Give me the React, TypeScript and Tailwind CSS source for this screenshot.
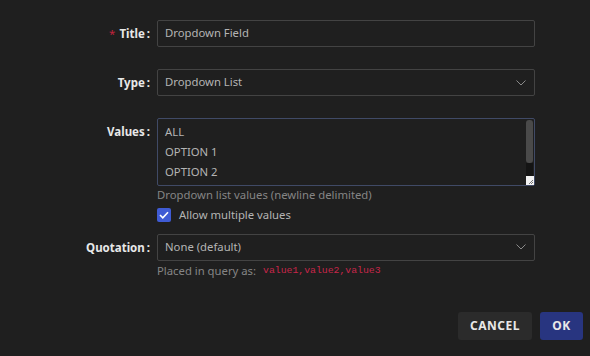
function Chevron() {
  return (
    <svg width="10" height="6" viewBox="0 0 10 6" className="text-[#8a8a8a]">
      <path d="M0.5 0.5 L5 5 L9.5 0.5" fill="none" stroke="currentColor" strokeWidth="1" />
    </svg>
  );
}

function Label({ text, required }: { text: string; required?: boolean }) {
  return (
    <div className="flex items-center justify-end text-[11.5px] font-bold text-[#e8e8e8] pr-[7px]">
      {required && <span className="text-[#c0233d] mr-[4px] font-normal">*</span>}
      <span>{text}</span>
      <span className="ml-[2px]">:</span>
    </div>
  );
}

function Select({ value }: { value: string }) {
  return (
    <div className="h-[27px] w-[378px] border border-[#434343] rounded-[2px] flex items-center justify-between pl-[7px] pr-[8px] text-[11.3px] text-[#b4b4b4]">
      <span>{value}</span>
      <Chevron />
    </div>
  );
}

export default function App() {
  return (
    <div
      className="w-[590px] h-[356px] bg-[#1f1f1f] flex flex-col"
      style={{ fontFamily: '"Noto Sans", "Open Sans", sans-serif' }}
    >
      <div className="pt-[20px] flex flex-col">
        {/* title */}
        <div className="grid grid-cols-[157px_378px] items-center">
          <Label text="Title" required />
          <div className="h-[27px] border border-[#434343] rounded-[2px] flex items-center pl-[7px] text-[11.3px] text-[#b4b4b4]">
            Dropdown Field
          </div>
        </div>

        {/* type */}
        <div className="grid grid-cols-[157px_378px] items-center mt-[22px]">
          <Label text="Type" />
          <Select value="Dropdown List" />
        </div>

        {/* values */}
        <div className="grid grid-cols-[157px_378px] mt-[22px]">
          <div className="pt-[5px]">
            <Label text="Values" />
          </div>
          <div className="flex flex-col">
            <div className="h-[68px] border border-[#404a66] rounded-[2px] flex">
              <div className="flex-1 pl-[7px] pt-[3px] text-[11.3px] leading-[20px] text-[#b4b4b4]">
                <div>ALL</div>
                <div>OPTION 1</div>
                <div>OPTION 2</div>
              </div>
              <div className="w-[7px] mr-[1px] flex flex-col">
                <div className="mt-[1px] h-[43px] bg-[#4a4a4a] rounded-[3px]" />
                <div className="flex-1 bg-[#141414]" />
                <div className="h-[9px] w-[8px] bg-[#f2f2f2] flex items-end justify-end">
                  <svg width="6" height="6" viewBox="0 0 6 6">
                    <path d="M5 1 L1 5 M5 3 L3 5" stroke="#555" strokeWidth="0.8" />
                  </svg>
                </div>
              </div>
            </div>
            <div className="text-[11.3px] text-[#858585] mt-[1px] leading-[16px]">
              Dropdown list values (newline delimited)
            </div>
            <div className="flex items-center mt-[4px] gap-[8px]">
              <div className="w-[14px] h-[14px] rounded-[2px] bg-[#3f5bd4] flex items-center justify-center">
                <svg width="10" height="8" viewBox="0 0 10 8">
                  <path d="M1 4 L3.8 6.8 L9 1.2" fill="none" stroke="#fff" strokeWidth="1.6" />
                </svg>
              </div>
              <span className="text-[11.3px] text-[#b4b4b4]">Allow multiple values</span>
            </div>
          </div>
        </div>

        {/* quotation */}
        <div className="grid grid-cols-[157px_378px] items-center mt-[10px]">
          <Label text="Quotation" />
          <Select value="None (default)" />
        </div>
        <div className="grid grid-cols-[157px_378px]">
          <div />
          <div className="flex items-center text-[11.3px] text-[#858585] leading-[16px] mt-[2px]">
            <span>Placed in query as:</span>
            <span
              className="ml-[7px] text-[9.8px] text-[#c9264a]"
              style={{ fontFamily: '"Liberation Mono", monospace' }}
            >
              value1,value2,value3
            </span>
          </div>
        </div>
      </div>

      <div className="mt-auto mb-[16px] flex justify-end gap-[8px] pr-[7px]">
        <button className="h-[28px] w-[74px] rounded-[3px] bg-[#2b2b2b] text-[12px] font-bold tracking-[0.5px] text-[#e8e8e8]">
          CANCEL
        </button>
        <button className="h-[28px] w-[43px] rounded-[3px] bg-[#283580] text-[12px] font-bold tracking-[0.5px] text-[#e8e8e8]">
          OK
        </button>
      </div>
    </div>
  );
}
